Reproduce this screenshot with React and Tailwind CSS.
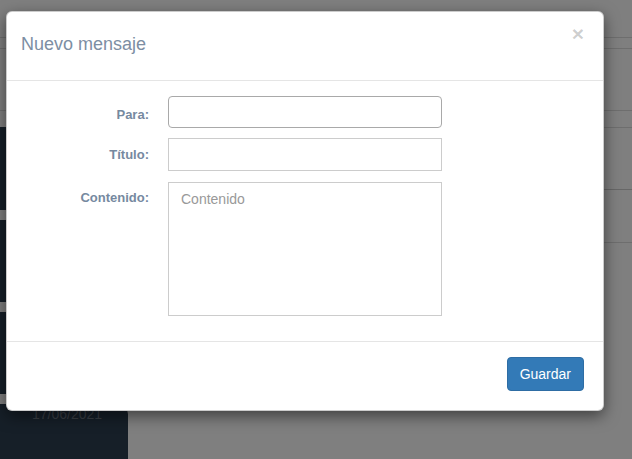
import React from 'react';

const font = { fontFamily: '"Liberation Sans", Arial, sans-serif' };

const Page = () => {
    return (
        <div className="absolute inset-0 bg-white">
            {/* Top bars */}
            <div className="h-[38px] border-b border-[#dcdcdc]"></div>
            <div className="h-[11px] border-b border-[#dcdcdc]"></div>
            <div className="h-[62px] border-b border-[#dcdcdc]"></div>

            <div className="flex">
                {/* Left column of cards */}
                <div className="w-[128px] pt-[16px] flex flex-col gap-[10px]">
                    <div className="h-[83px] bg-[#2c3e50] rounded-r-[8px]"></div>
                    <div className="h-[82px] bg-[#2c3e50] rounded-r-[8px]"></div>
                    <div className="h-[82px] bg-[#2c3e50] rounded-r-[8px]"></div>
                    <div className="h-[80px] bg-[#2c3e50] rounded-tr-[10px] pl-[32px] text-[14px] leading-5 text-[#737d88]">
                        17/06/2021
                    </div>
                </div>

                {/* Right rows */}
                <div className="flex-1 flex flex-col">
                    <div className="h-[17px] border-b border-[#dcdcdc]"></div>
                    <div className="h-[62px] border-b border-[#cfcfcf]"></div>
                    <div className="h-[53px] border-b border-[#dcdcdc]"></div>
                </div>
            </div>
        </div>
    );
};

const App = () => {
    return (
        <div className="relative w-[632px] h-[459px] overflow-hidden" style={font}>
            <Page />

            {/* Backdrop */}
            <div className="absolute inset-0 bg-black/50"></div>

            {/* Modal */}
            <div className="absolute left-[6px] top-[11px] w-[598px] bg-white border border-black/20 rounded-[6px] shadow-[0_5px_15px_rgba(0,0,0,0.5)]">
                <div className="h-[69px] border-b border-[#e5e5e5] flex items-start justify-between pl-[14px] pr-[19px]">
                    <h4 className="pt-[19px] text-[18px] leading-[26px] text-[#7d8ea3]">Nuevo mensaje</h4>
                    <button className="pt-[11px] text-[21px] leading-[21px] font-bold text-black/20">×</button>
                </div>

                <div className="pt-[15px] pb-[25px] flex flex-col">
                    <div className="flex gap-[19px] mb-[10px]">
                        <label className="w-[142px] text-right pt-[9px] text-[13px] leading-5 font-bold text-[#7689a0]">Para:</label>
                        <input type="text" className="w-[274px] h-[32px] border border-[#a9a9a9] rounded-[4px] px-3 text-[14px] outline-none" />
                    </div>
                    <div className="flex gap-[19px] mb-[11px]">
                        <label className="w-[142px] text-right pt-[7px] text-[13px] leading-5 font-bold text-[#7689a0]">Título:</label>
                        <input type="text" className="w-[274px] h-[33px] border border-[#cccccc] px-3 text-[14px] outline-none" />
                    </div>
                    <div className="flex gap-[19px]">
                        <label className="w-[142px] text-right pt-[6px] text-[13px] leading-5 font-bold text-[#7689a0]">Contenido:</label>
                        <textarea
                            placeholder="Contenido"
                            className="w-[274px] h-[134px] border border-[#cccccc] px-[12px] py-[6px] text-[14px] leading-5 resize-none outline-none placeholder:text-[#999999]"
                        ></textarea>
                    </div>
                </div>

                <div className="border-t border-[#e5e5e5] pt-[15px] pb-[19px] pr-[19px] flex justify-end">
                    <button className="h-[34px] px-[12px] bg-[#337ab7] border border-[#2e6da4] rounded-[4px] text-white text-[14px] leading-5">
                        Guardar
                    </button>
                </div>
            </div>
        </div>
    );
};

export default App;
